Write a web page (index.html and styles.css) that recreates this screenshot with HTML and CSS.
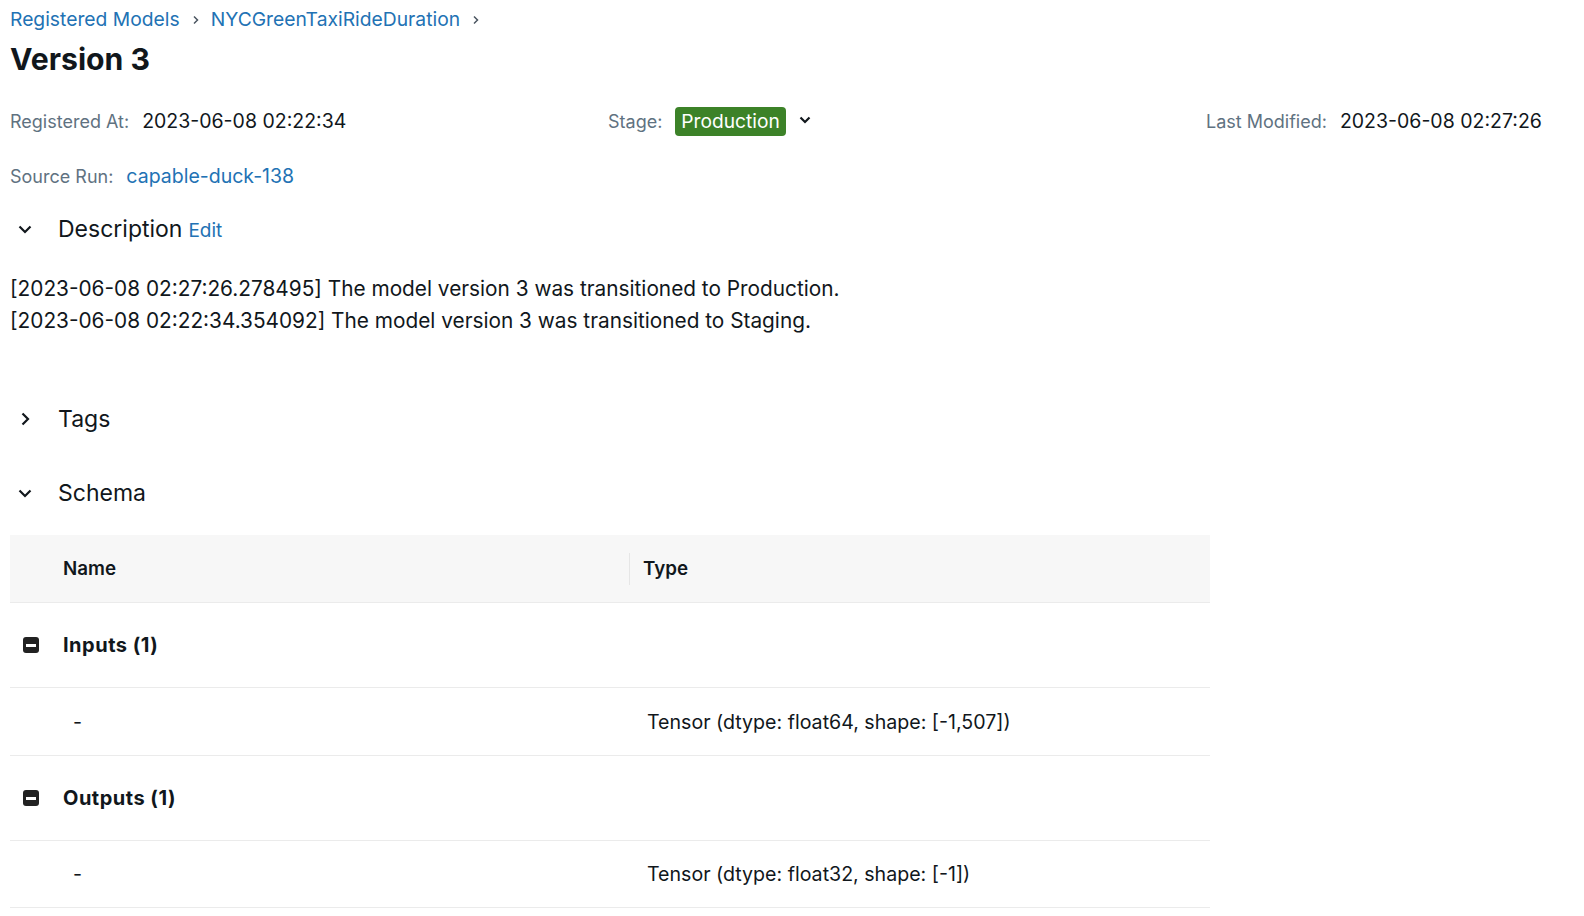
FILE: index.html
```html
<!DOCTYPE html>
<html>
<head>
<meta charset="utf-8">
<link rel="stylesheet" href="styles.css">
</head>
<body>
<div class="page">
  <nav class="crumbs">
    <a class="link">Registered Models</a>
    <span class="sep"><svg width="8" height="10" viewBox="0 0 8 10"><path d="M2 1.5 L5.5 5 L2 8.5" fill="none" stroke="#4a5560" stroke-width="1.5"/></svg></span>
    <a class="link">NYCGreenTaxiRideDuration</a>
    <span class="sep"><svg width="8" height="10" viewBox="0 0 8 10"><path d="M2 1.5 L5.5 5 L2 8.5" fill="none" stroke="#4a5560" stroke-width="1.5"/></svg></span>
  </nav>
  <h1 class="title">Version 3</h1>

  <div class="meta">
    <div class="meta-item"><span class="label">Registered At:</span><span class="val">2023-06-08 02:22:34</span></div>
    <div class="meta-item"><span class="label">Stage:</span><span class="badge">Production</span><span class="dd"><svg width="14" height="14" viewBox="0 0 14 14"><path d="M2.5 4.5 L7 9 L11.5 4.5" fill="none" stroke="#11171c" stroke-width="2.2"/></svg></span></div>
    <div class="meta-item"><span class="label">Last Modified:</span><span class="val">2023-06-08 02:27:26</span></div>
  </div>

  <div class="meta-item source"><span class="label">Source Run:</span><a class="link val">capable-duck-138</a></div>

  <div class="section-head desc-head">
    <span class="chev"><svg width="18" height="18" viewBox="0 0 18 18"><path d="M3.5 6.5 L9 12 L14.5 6.5" fill="none" stroke="#11171c" stroke-width="2.2"/></svg></span>
    <span class="sec-title">Description</span><a class="link edit">Edit</a>
  </div>
  <div class="desc">
    <p>[2023-06-08 02:27:26.278495] The model version 3 was transitioned to Production.</p>
    <p>[2023-06-08 02:22:34.354092] The model version 3 was transitioned to Staging.</p>
  </div>

  <div class="section-head tags-head">
    <span class="chev"><svg width="18" height="18" viewBox="0 0 18 18"><path d="M6.5 3.5 L12 9 L6.5 14.5" fill="none" stroke="#11171c" stroke-width="2.2"/></svg></span>
    <span class="sec-title">Tags</span>
  </div>

  <div class="section-head schema-head">
    <span class="chev"><svg width="18" height="18" viewBox="0 0 18 18"><path d="M3.5 6.5 L9 12 L14.5 6.5" fill="none" stroke="#11171c" stroke-width="2.2"/></svg></span>
    <span class="sec-title">Schema</span>
  </div>

  <div class="table">
    <div class="row head">
      <div class="cell name">Name</div>
      <div class="cell type"><span class="colsep"></span>Type</div>
    </div>
    <div class="row group">
      <div class="cell name"><span class="minus"></span>Inputs (1)</div>
      <div class="cell type"></div>
    </div>
    <div class="row item">
      <div class="cell name dash">-</div>
      <div class="cell type tval">Tensor (dtype: float64, shape: [-1,507])</div>
    </div>
    <div class="row group">
      <div class="cell name"><span class="minus"></span>Outputs (1)</div>
      <div class="cell type"></div>
    </div>
    <div class="row item">
      <div class="cell name dash">-</div>
      <div class="cell type tval">Tensor (dtype: float32, shape: [-1])</div>
    </div>
  </div>
</div>
</body>
</html>
```

FILE: styles.css
```css
* { box-sizing: border-box; }
html, body { margin: 0; padding: 0; background: #fff; }
body {
  font-family: Inter, "Liberation Sans", sans-serif;
  color: #11171c;
}
p { margin: 0; }

.page { padding: 0 10px; }

.link { color: #2272b4; text-decoration: none; cursor: pointer; }

.crumbs {
  height: 38px;
  display: flex;
  align-items: center;
  font-size: 19.3px;
  padding-bottom: 1px;
}
.crumbs .sep { display: inline-flex; margin: 0 11px 0 12px; padding-top: 2px; }

.title {
  margin: 0;
  font-size: 30.2px;
  font-weight: 700;
  height: 42px;
  line-height: 42px;
}

.meta {
  display: grid;
  grid-template-columns: 598px 598px 1fr;
  margin-top: 20px;
  height: 42px;
  align-items: center;
}
.meta-item { display: flex; align-items: center; font-size: 18px; }
.label { color: #5f7281; margin-right: 13px; }
.val { font-size: 19.5px; }
.link.val { color: #2272b4; }
.badge {
  background: #3c8228;
  color: #fff;
  height: 29px;
  line-height: 29px;
  padding: 0 6px;
  border-radius: 4px;
  font-size: 19.2px;
}
.dd { display: inline-flex; margin-left: 12px; margin-top: -2px; }

.source { height: 42px; margin-top: 13px; }

.section-head {
  display: flex;
  align-items: center;
  height: 40px;
}
.chev { width: 48px; display: inline-flex; padding-left: 6px; }
.sec-title { font-size: 23px; }
.edit { font-size: 19px; margin-left: 6px; margin-top: 3px; }

.desc-head { margin-top: 12px; }

.desc { margin-top: 24px; font-size: 20.8px; }
.desc p { height: 32px; line-height: 32px; }

.tags-head { margin-top: 62px; }
.schema-head { margin-top: 34px; }

.table { width: 1200px; margin-top: 22px; }
.row { display: flex; border-bottom: 1px solid #ebebeb; align-items: center; }
.row.head { background: #f7f7f7; height: 68px; font-weight: 600; font-size: 18.8px; }
.row.group { height: 85px; font-weight: 700; font-size: 20px; letter-spacing: 0.5px; }
.row.item { height: 68px; font-size: 19.6px; }
.row.item:last-child { height: 67px; }
.cell.name { width: 620px; padding-left: 53px; display: flex; align-items: center; position: relative; }
.cell.type { flex: 1; display: flex; align-items: center; position: relative; padding-left: 13px; }
.colsep {
  position: absolute; left: -1px; top: 50%; margin-top: -16px; width: 1px; height: 32px; background: #e6e6e6;
}
.minus {
  position: absolute; left: 13px; top: 50%; margin-top: -8px;
  width: 16px; height: 16px; border-radius: 3px; background: #222;
}
.minus::after {
  content: ""; position: absolute; left: 3px; right: 3px; top: 7px; height: 2.5px; background: #fff;
}
.cell.name.dash { padding-left: 63px; }
.cell.type.tval { padding-left: 17px; }
```
